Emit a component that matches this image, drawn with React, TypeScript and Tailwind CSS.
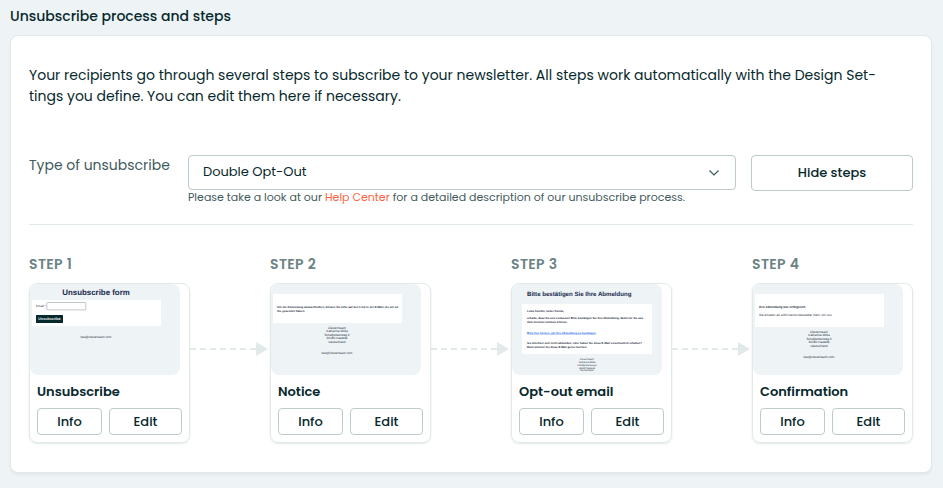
import React from "react";

const address = [
  "CleverReach",
  "Katharina Milita",
  "Schafjückenweg 2",
  "26180 Rastede",
  "Deutschland",
];

const Address = ({ x, y, gap, size }: { x: number; y: number; gap: number; size: number }) => (
  <>
    {address.map((line, index) => (
      <text key={line} x={x} y={y + index * gap} fontSize={size} textAnchor="middle">
        {line}
      </text>
    ))}
  </>
);

const Preview = ({ children }: { children: React.ReactNode }) => (
  <svg
    viewBox="0 0 150 91"
    className="block h-[91px] w-[150px] rounded-lg bg-[#eef3f6] font-['Liberation_Sans',sans-serif]"
    fill="#1f3040"
    textRendering="geometricPrecision"
    aria-hidden="true"
  >
    {children}
  </svg>
);

const UnsubscribePreview = () => (
  <Preview>
    <text x="66" y="11.3" fontSize="7.9" fontWeight="700" textAnchor="middle" fill="#17294a">
      Unsubscribe form
    </text>
    <rect x="2" y="16" width="129" height="26" fill="#fff" />
    <text x="6" y="23.4" fontSize="3.1">Email *</text>
    <rect x="16.8" y="18.5" width="39" height="7.4" rx="0.5" fill="#fff" stroke="#b4b8bb" strokeWidth="0.8" />
    <rect x="6" y="31" width="27" height="8" rx="0.5" fill="#06282c" />
    <text x="19.5" y="36.3" fontSize="3.7" fontWeight="700" textAnchor="middle" fill="#e8eeee">
      Unsubscribe
    </text>
    <text x="66" y="53.8" fontSize="3.1" textAnchor="middle">test@cleverreach.com</text>
  </Preview>
);

const NoticePreview = () => (
  <Preview>
    <rect x="2" y="10" width="129" height="29" fill="#fff" />
    <g fontSize="2.9" fontWeight="700">
      <text x="6" y="24">
        Um die Abmeldung abzuschließen, klicken Sie bitte auf den Link in der E-Mail, die wir an
      </text>
      <text x="6" y="28">Sie gesendet haben.</text>
    </g>
    <Address x={66} y={44.6} gap={3.6} size={3.1} />
    <text x="66" y="69.8" fontSize="3.1" textAnchor="middle">test@cleverreach.com</text>
  </Preview>
);

const EmailPreview = () => (
  <Preview>
    <text x="15" y="12.2" fontSize="6.1" fontWeight="700" fill="#17294a">
      Bitte bestätigen Sie Ihre Abmeldung
    </text>
    <rect x="10" y="20" width="130" height="50" fill="#fff" />
    <g fontSize="2.8" fontWeight="700">
      <text x="15" y="28">Liebe Kundin, lieber Kunde,</text>
      <text x="15" y="34.8">
        schade, dass Sie uns verlassen! Bitte bestätigen Sie Ihre Abmeldung, damit wir Sie aus
      </text>
      <text x="15" y="38.6">dem Verteiler nehmen können.</text>
      <text x="15" y="49.6" fill="#2f6fe0" textDecoration="underline">
        Bitte hier klicken, um Ihre Abmeldung zu bestätigen
      </text>
      <text x="15" y="60">
        Sie möchten sich nicht abmelden, oder haben Sie diese E-Mail versehentlich erhalten?
      </text>
      <text x="15" y="64">Dann können Sie diese E-Mail gerne löschen.</text>
    </g>
    <Address x={75} y={76.4} gap={2.7} size={2.4} />
  </Preview>
);

const ConfirmationPreview = () => (
  <Preview>
    <rect x="2" y="10" width="129" height="33" fill="#fff" />
    <text x="6" y="24" fontSize="3.1" fontWeight="700">Ihre Abmeldung war erfolgreich</text>
    <text x="6" y="32" fontSize="3.1">
      Sie erhalten ab sofort keine Newsletter mehr von uns.
    </text>
    <Address x={66} y={48.6} gap={3.6} size={3.1} />
    <text x="66" y="73.8" fontSize="3.1" textAnchor="middle">test@cleverreach.com</text>
  </Preview>
);

const steps = [
  { title: "Unsubscribe", preview: <UnsubscribePreview /> },
  { title: "Notice", preview: <NoticePreview /> },
  { title: "Opt-out email", preview: <EmailPreview /> },
  { title: "Confirmation", preview: <ConfirmationPreview /> },
];

const Connector = () => (
  <div className="mt-[88px] flex h-3.5 min-w-8 flex-1 items-center pr-0.5" aria-hidden="true">
    <svg className="h-0.5 min-w-0 flex-1">
      <line x1="0" y1="1" x2="100%" y2="1" stroke="#e1e9e9" strokeWidth="2" strokeDasharray="6 4" />
    </svg>
    <svg className="h-3.5 w-3 shrink-0" viewBox="0 0 12 14">
      <path d="M0 0L12 7L0 14Z" fill="#e1e9e9" />
    </svg>
  </div>
);

export const UnsubscribeSteps = () => {
  return (
    <main className="min-h-screen bg-[#eef3f6] pt-1 pr-[11px] pb-4 pl-2.5 font-['Poppins','Inter',sans-serif] text-[#06282c]">
      <h1 className="text-sm leading-6 font-medium">Unsubscribe process and steps</h1>

      <section className="mt-[7px] rounded-lg border border-[#e1e9e9] bg-white px-[18px] pt-[29px] pb-[29px] shadow-[0_2px_2px_#e1e9e9]">
        <p className="pr-5 text-sm leading-[21px]">
          Your recipients go through several steps to subscribe to your newsletter. All steps work
          automatically with the Design Set&shy;tings you define. You can edit them here if
          necessary.
        </p>

        <div className="mt-12 flex items-start border-b border-[#e1e9e9] pb-5">
          <label htmlFor="unsubscribe-type" className="w-[159px] shrink-0 text-sm leading-5 text-[#3f5a5c]">
            Type of unsubscribe
          </label>
          <div className="min-w-0 flex-1">
            <div className="relative">
              <select
                id="unsubscribe-type"
                className="block h-[35px] w-full appearance-none rounded border border-[#bccbcb] bg-white px-3.5 pb-0.5 text-[13px]"
              >
                <option>Double Opt-Out</option>
                <option>Single Opt-Out</option>
              </select>
              <svg
                className="pointer-events-none absolute top-3.5 right-4 h-2 w-3"
                viewBox="0 0 12 8"
                fill="none"
                stroke="#3f5a5c"
                strokeWidth="1.2"
              >
                <path d="M1.5 1.5L6 6L10.5 1.5" />
              </svg>
            </div>
            <p className="text-[11px] leading-[14px] text-[#3f5a5c]">
              Please take a look at our{" "}
              <a href="#help" className="text-[#f9633f]">
                Help Center
              </a>{" "}
              for a detailed description of our unsubscribe process.
            </p>
          </div>
          <button className="ml-[15px] h-9 w-[162px] shrink-0 rounded border border-[#bccbcb] text-[13px] font-medium">
            Hide steps
          </button>
        </div>

        <div className="mt-[29px] flex">
          {steps.map((step, index) => (
            <React.Fragment key={step.title}>
              {index > 0 && <Connector />}
              <div className="w-[161px] shrink-0">
                <h2 className="text-sm leading-5 font-semibold tracking-wide text-[#6b8385]">STEP {index + 1}</h2>
                <div className="mt-[9px] overflow-hidden rounded-lg border border-[#e1e9e9] shadow-[0_1px_2px_#e1e9e9]">
                  {step.preview}
                  <div className="px-[7px] pt-2 pb-[7px]">
                    <h3 className="text-[13px] leading-[18px] font-semibold">{step.title}</h3>
                    <div className="mt-[7px] flex gap-[7px]">
                      <button className="h-[27px] w-[65px] rounded border border-[#bccbcb] text-[13px] font-medium">
                        Info
                      </button>
                      <button className="h-[27px] flex-1 rounded border border-[#bccbcb] text-[13px] font-medium">
                        Edit
                      </button>
                    </div>
                  </div>
                </div>
              </div>
            </React.Fragment>
          ))}
        </div>
      </section>
    </main>
  );
};

export default UnsubscribeSteps;
